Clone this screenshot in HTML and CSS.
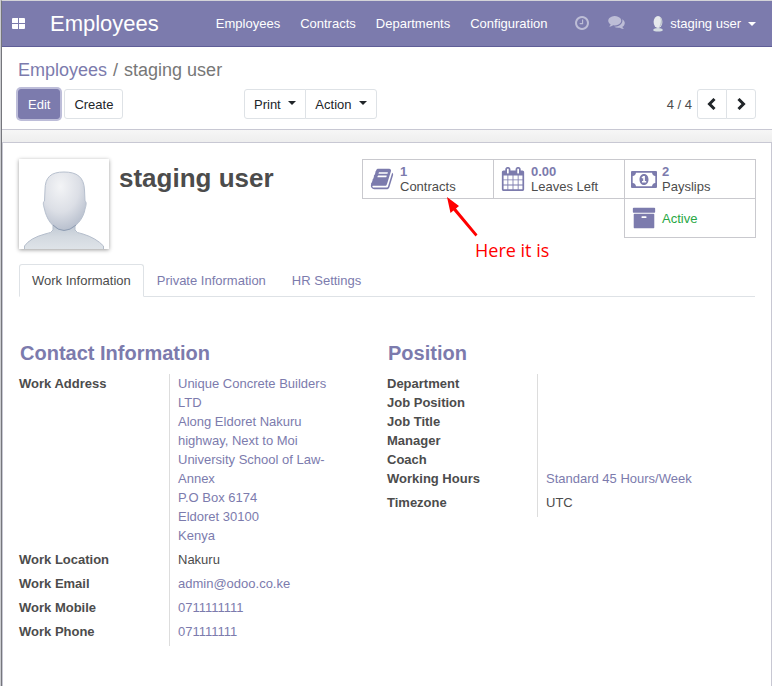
FILE: index.html
```html
<!DOCTYPE html>
<html lang="en">
<head>
<meta charset="utf-8">
<title>Employees - staging user</title>
<link rel="stylesheet" href="styles.css">
</head>
<body>
<header class="navbar">
  <a class="apps" href="#" aria-label="Applications">
    <svg viewBox="0 0 13 11"><path d="M0 1q0-1 1-1h5v5H0zM7 0h5q1 0 1 1v4H7zM0 6h6v5H1q-1 0-1-1zM7 6h6v4q0 1-1 1H7z"/></svg>
  </a>
  <a class="brand" href="#">Employees</a>
  <nav class="menu">
    <a href="#">Employees</a>
    <a href="#">Contracts</a>
    <a href="#">Departments</a>
    <a href="#">Configuration</a>
  </nav>
  <div class="systray">
    <a href="#" class="tray" aria-label="Activities"><svg class="clock" viewBox="128 128 1536 1536"><path d="M1024 544v448q0 14-9 23t-23 9h-320q-14 0-23-9t-9-23v-64q0-14 9-23t23-9h224v-352q0-14 9-23t23-9h64q14 0 23 9t9 23zm416 352q0-148-73-273t-198-198-273-73-273 73-198 198-73 273 73 273 198 198 273 73 273-73 198-198 73-273zm224 0q0 209-103 385.5t-279.5 279.5-385.5 103-385.5-103-279.5-279.5-103-385.5 103-385.5 279.5-279.5 385.5-103 385.5 103 279.5 279.5 103 385.5z"/></svg></a>
    <a href="#" class="tray" aria-label="Conversations"><svg class="chat" viewBox="0 256 1792 1408"><path d="M1408 768q0 139-94 257t-256.5 186.5-353.5 68.5q-86 0-176-16-124 88-278 128-36 9-86 16h-3q-11 0-20.5-8t-11.5-21q-1-3-1-6.5t.5-6.5 2-6l2.5-5 3.5-5.5 4-5 4.5-5 4-4.5q5-6 23-25t26-29.5 22.5-29 25-38.5 20.5-44q-124-72-195-177t-71-224q0-139 94-257t256.5-186.5 353.5-68.5 353.5 68.5 256.5 186.5 94 257zm384 256q0 120-71 224.5t-195 176.5q10 24 20.5 44t25 38.5 22.5 29 26 29.5 23 25q1 1 4 4.5t4.5 5 4 5 3.5 5.5l2.5 5 2 6 .5 6.5-1 6.5q-3 14-13 22t-22 7q-50-7-86-16-154-40-278-128-90 16-176 16-271 0-472-132 58 4 88 4 161 0 309-45t264-129q125-92 192-212t67-254q0-77-23-152 129 71 204 178t75 230z"/></svg></a>
    <a href="#" class="user">
      <svg viewBox="0 0 12 16"><path d="M1 14q1-2 5-2t5 2l-1 1q-4 1-8 0z" fill="#d5dde2"/><ellipse cx="6" cy="6" rx="4.400" ry="6" fill="#e6e9ec"/><path d="M8 1q2 5-1 10 3-1 3-5 0-4-2-5z" fill="#b9c0ca"/></svg>
      <span>staging user</span><i class="caret"></i>
    </a>
  </div>
</header>

<section class="panel">
  <ol class="crumbs">
    <li><a href="#">Employees</a></li>
    <li>staging user</li>
  </ol>
  <div class="actions">
    <div class="main-buttons">
      <button type="button" class="btn primary">Edit</button>
      <button type="button" class="btn">Create</button>
    </div>
    <div class="group">
      <button type="button" class="btn">Print <i class="caret"></i></button>
      <button type="button" class="btn">Action <i class="caret"></i></button>
    </div>
    <div class="pager">
      <span>4 / 4</span>
      <div class="group">
        <button type="button" class="btn" aria-label="Previous"><svg viewBox="0 0 10 12"><path d="M7.500 1 2.500 6l5 5"/></svg></button>
        <button type="button" class="btn" aria-label="Next"><svg viewBox="0 0 10 12"><path d="M2.500 1 7.500 6l-5 5"/></svg></button>
      </div>
    </div>
  </div>
</section>

<main class="content">
  <article class="sheet">
    <div class="top">
      <svg class="avatar" viewBox="0 0 90 90" role="img" aria-label="Employee photo">
        <defs>
          <radialGradient id="face" cx=".4" cy=".25" r=".8"><stop offset="0" stop-color="#f3f4f6"/><stop offset=".55" stop-color="#dcdfe6"/><stop offset="1" stop-color="#b4bccb"/></radialGradient>
          <linearGradient id="body" x2="0" y2="1"><stop offset="0" stop-color="#bcc5d1"/><stop offset=".5" stop-color="#d3d9e0"/><stop offset="1" stop-color="#dfe4e9"/></linearGradient>
        </defs>
        <path d="M34 64v7q-1 3-8 4Q11 79 5.500 87v4h79v-4Q77 79 64 75q-7-1-8-4v-7z" fill="url(#body)" stroke="#b4bdcb"/>
        <path d="M45 13c13 0 20 5 20.500 18l.5 11c2 1 1 5 0 8-1 8-9 21-21 21S27 58 25.500 50c-1-3-2-7 0-8L26 31C26 18 32 13 45 13z" fill="url(#face)" stroke="#b7c0ce"/>
        <path d="M34 66q5 5.500 11 5.500T57 66" fill="none" stroke="#8f9db3"/>
      </svg>
      <h1>staging user</h1>
      <div class="stats">
        <button type="button" class="stat">
          <svg viewBox="0 0 1792 1792"><path d="M1703 478q40 57 18 129l-275 906q-19 64-76.5 107.5t-122.5 43.5h-923q-77 0-148.5-53.5t-99.5-131.5q-24-67-2-127 0-4 3-27t4-37q1-8-3-21.5t-3-19.500q2-11 8-21t16.500-23.500 16.500-23.500q23-38 45-91.500t30-91.500q3-10 .5-30t-.5-28q3-11 17-28t17-23q21-36 42-92t25-90q1-9-2.500-32t.5-28q4-13 22-30.500t22-22.500q19-26 42.500-84.500t27.500-96.500q1-8-3-25.500t-2-26.500q2-8 9-18t18-23 17-21q8-12 16.500-30.500t15-35 16-36 19.500-32 26.500-23.500 36-11.500 47.500 5.500l-1 3q38-9 51-9h761q74 0 114 56t18 130l-274 906q-36 119-71.500 153.500t-128.500 34.500h-869q-27 0-38 15-11 16-1 43 24 70 144 70h923q29 0 56-15.500t35-41.500l300-987q7-22 5-57 38 15 59 43zm-1064 2q-4 13 2 22.500t20 9.500h608q13 0 25.500-9.500t16.500-22.500l21-64q4-13-2-22.500t-20-9.500h-608q-13 0-25.500 9.500t-16.500 22.500zm-83 256q-4 13 2 22.500t20 9.500h608q13 0 25.500-9.500t16.500-22.500l21-64q4-13-2-22.500t-20-9.500h-608q-13 0-25.500 9.500t-16.500 22.500z"/></svg>
          <span><b>1</b>Contracts</span>
        </button>
        <button type="button" class="stat">
          <svg viewBox="0 0 1792 1792"><path d="M192 1664h288v-288h-288v288zm352 0h320v-288h-320v288zm-352-352h288v-320h-288v320zm352 0h320v-320h-320v320zm-352-384h288v-288h-288v288zm736 736h320v-288h-320v288zm-384-736h320v-288h-320v288zm768 736h288v-288h-288v288zm-384-352h320v-320h-320v320zm-352-864v-288q0-13-9.500-22.500t-22.500-9.500h-64q-13 0-22.500 9.500t-9.500 22.500v288q0 13 9.500 22.500t22.500 9.500h64q13 0 22.500-9.500t9.500-22.500zm736 864h288v-320h-288v320zm-384-384h320v-288h-320v288zm384 0h288v-288h-288v288zm32-480v-288q0-13-9.500-22.500t-22.500-9.500h-64q-13 0-22.500 9.500t-9.500 22.500v288q0 13 9.500 22.500t22.500 9.500h64q13 0 22.500-9.500t9.500-22.500zm384-64v1280q0 52-38 90t-90 38h-1408q-52 0-90-38t-38-90v-1280q0-52 38-90t90-38h128v-96q0-66 47-113t113-47h64q66 0 113 47t47 113v96h384v-96q0-66 47-113t113-47h64q66 0 113 47t47 113v96h128q52 0 90 38t38 90z"/></svg>
          <span><b>0.00</b>Leaves Left</span>
        </button>
        <button type="button" class="stat">
          <svg viewBox="0 0 26 24"><path fill-rule="evenodd" d="M1 4h24q1 0 1 1v15q0 1-1 1H1q-1 0-1-1V5q0-1 1-1zM5 5.700Q4.600 8.700 1.700 9v7q2.900.3 3.300 3.300h16q.4-3 3.300-3.300V9q-2.900-.3-3.300-3.300zM13 7c3 0 4.500 2.600 4.500 5.500S16 18 13 18s-4.500-2.600-4.500-5.500S10 7 13 7zm-.8 2-1.700 1.500.9 1 .8-.6V14H11v1.400h4.200V14h-1.300V9z"/></svg>
          <span><b>2</b>Payslips</span>
        </button>
        <button type="button" class="stat active">
          <svg viewBox="0 0 1792 1792"><path d="M1088 832q0-26-19-45t-45-19h-256q-26 0-45 19t-19 45 19 45 45 19h256q26 0 45-19t19-45zm576-192v960q0 26-19 45t-45 19h-1408q-26 0-45-19t-19-45v-960q0-26 19-45t45-19h1408q26 0 45 19t19 45zm64-448v256q0 26-19 45t-45 19h-1536q-26 0-45-19t-19-45v-256q0-26 19-45t45-19h1536q26 0 45 19t19 45z"/></svg>
          <span>Active</span>
        </button>
        <div class="callout">
          <svg viewBox="0 0 32 40"><path d="M0 0 12 9 9 11.500 30.500 37.500 28.500 39.500 6.500 13.500 3.500 16z"/></svg>
          <span>Here it is</span>
        </div>
      </div>
    </div>

    <nav class="tabs">
      <a href="#" class="current">Work Information</a>
      <a href="#">Private Information</a>
      <a href="#">HR Settings</a>
    </nav>

    <div class="columns">
      <section>
        <h2>Contact Information</h2>
        <table>
          <tr class="filled"><th scope="row">Work Address</th><td><a href="#">Unique Concrete Builders LTD<br>Along Eldoret Nakuru highway, Next to Moi University School of Law-Annex<br>P.O Box 6174<br>Eldoret 30100<br>Kenya</a></td></tr>
          <tr class="filled"><th scope="row">Work Location</th><td>Nakuru</td></tr>
          <tr class="filled"><th scope="row">Work Email</th><td><a href="#">admin@odoo.co.ke</a></td></tr>
          <tr class="filled"><th scope="row">Work Mobile</th><td><a href="#">0711111111</a></td></tr>
          <tr class="filled"><th scope="row">Work Phone</th><td><a href="#">071111111</a></td></tr>
        </table>
      </section>
      <section>
        <h2>Position</h2>
        <table>
          <tr><th scope="row">Department</th><td></td></tr>
          <tr><th scope="row">Job Position</th><td></td></tr>
          <tr><th scope="row">Job Title</th><td></td></tr>
          <tr><th scope="row">Manager</th><td></td></tr>
          <tr><th scope="row">Coach</th><td></td></tr>
          <tr class="filled"><th scope="row">Working Hours</th><td><a href="#">Standard 45 Hours/Week</a></td></tr>
          <tr class="filled"><th scope="row">Timezone</th><td>UTC</td></tr>
        </table>
      </section>
    </div>
  </article>
</main>
</body>
</html>
```
FILE: styles.css
```css
* { box-sizing: border-box; }
html { background: #fff; border-left: 1px solid #cbccd0; }
body {
  margin: 0;
  min-height: 100vh;
  display: flex;
  flex-direction: column;
  border-left: 1px solid #75767c;
  border-top: 1px solid #d3d3d8;
  font: 13px/19px "Liberation Sans", Arial, sans-serif;
  color: #4c4c4c;
}
a { color: #7c7bad; text-decoration: none; }
svg { display: block; flex: none; fill: currentColor; }
button { font: inherit; color: inherit; cursor: pointer; }
.caret {
  display: inline-block;
  border: 4px solid transparent;
  border-top-color: currentColor;
  border-bottom: 0;
  margin-left: 4px;
  vertical-align: 4px;
}

.navbar {
  display: flex;
  align-items: center;
  height: 46px;
  padding: 0 16px 0 10px;
  background: #7c7bad;
  border-bottom: 1px solid #5f5e97;
}
.navbar a { color: #fff; }
.apps svg { width: 13px; height: 11px; }
.brand { margin-left: 25px; font-size: 22px; line-height: 30px; }
.menu { display: flex; gap: 20px; margin-left: 57px; }
.systray { display: flex; align-items: center; margin-left: auto; }
.navbar .tray { color: #bdbdd6; margin-right: 19px; padding-bottom: 2px; }
.clock { width: 14px; height: 14px; }
.chat { width: 17px; height: 13px; }
.navbar .user { display: flex; align-items: center; margin-left: 8px; }
.user svg { width: 12px; height: 16px; margin-right: 6px; }
.user .caret { margin-left: 7px; }

.panel { padding: 12px 16px 10px; border-bottom: 1px solid #c8c8d3; }
.crumbs {
  display: flex;
  margin: 0;
  padding: 0;
  list-style: none;
  font-size: 18px;
  line-height: 22px;
  color: #777;
}
.crumbs li + li::before { content: "/"; padding: 0 6px; }
.actions { display: grid; grid-template-columns: 226px 1fr auto; margin-top: 8px; }
.main-buttons { display: flex; gap: 4px; }
.btn {
  height: 30px;
  padding: 0 9px;
  border: 1px solid #dee2e6;
  border-radius: 3px;
  background: #fff;
  color: #212529;
}
.btn.primary {
  border-color: #7c7bad;
  background: #7c7bad;
  color: #fff;
  box-shadow: 0 0 0 2px #bdbdd9;
}
.group { display: flex; }
.group .btn:first-child { border-radius: 3px 0 0 3px; }
.group .btn:last-child { border-radius: 0 3px 3px 0; margin-left: -1px; }
.pager { display: flex; align-items: center; gap: 5px; }
.pager svg { width: 10px; height: 12px; fill: none; stroke: currentColor; stroke-width: 3; }

.content {
  flex: 1;
  display: flex;
  padding-top: 12px;
  background: linear-gradient(#f6f6f6, #eee 12px);
}
.sheet {
  flex: 1;
  padding: 16px 16px 40px 15px;
  background: #fff;
  border: 1px solid #c8c8d3;
  border-bottom: 0;
}
.top { display: flex; align-items: flex-start; margin-bottom: 15px; }
.avatar { width: 90px; height: 90px; margin-left: 1px; background: #fff; box-shadow: 0 1px 4px rgba(0, 0, 0, .4); }
h1 { flex: 1; margin: 4px 0 0 10px; font-size: 26px; line-height: 30px; }
.stats {
  position: relative;
  display: grid;
  grid-template-columns: repeat(3, 131px);
  padding-bottom: 1px;
}
.stat {
  display: flex;
  align-items: center;
  height: 40px;
  margin: 0 -1px -1px 0;
  padding: 0 6px;
  border: 1px solid #c9c9ce;
  background: #fff;
  text-align: left;
  line-height: 15px;
}
.stat svg { width: 26px; height: 24px; margin-right: 5px; color: #7c7bad; }
.stat b { display: block; color: #7c7bad; }
.stat.active { grid-column: 3; color: #28a745; }
.callout { position: absolute; left: 85px; top: 38px; color: #f00; }
.callout svg { width: 32px; height: 40px; }
.callout span { display: block; margin-left: 28px; font: 18px/26px "Open Sans", sans-serif; }

.tabs { display: flex; margin-left: 1px; border-bottom: 1px solid #dee2e6; }
.tabs a { margin-bottom: -1px; padding: 6px 12px; border: 1px solid transparent; }
.tabs .current {
  color: #4c4c4c;
  background: #fff;
  border-color: #dee2e6 #dee2e6 #fff;
  border-radius: 3px 3px 0 0;
}

.columns { display: grid; grid-template-columns: 1fr 1fr; margin: 43px 0 0 1px; }
.columns section { padding-right: 46px; }
h2 { margin: 0 0 8px 1px; font-size: 20px; line-height: 26px; color: #7c7bad; }
table { width: 100%; border-spacing: 0; }
th { width: 150px; padding: 0; text-align: left; vertical-align: top; }
td { height: 19px; padding: 0 0 0 8px; border-left: 1px solid #ddd; vertical-align: top; }
.filled td { padding-bottom: 5px; }
```
